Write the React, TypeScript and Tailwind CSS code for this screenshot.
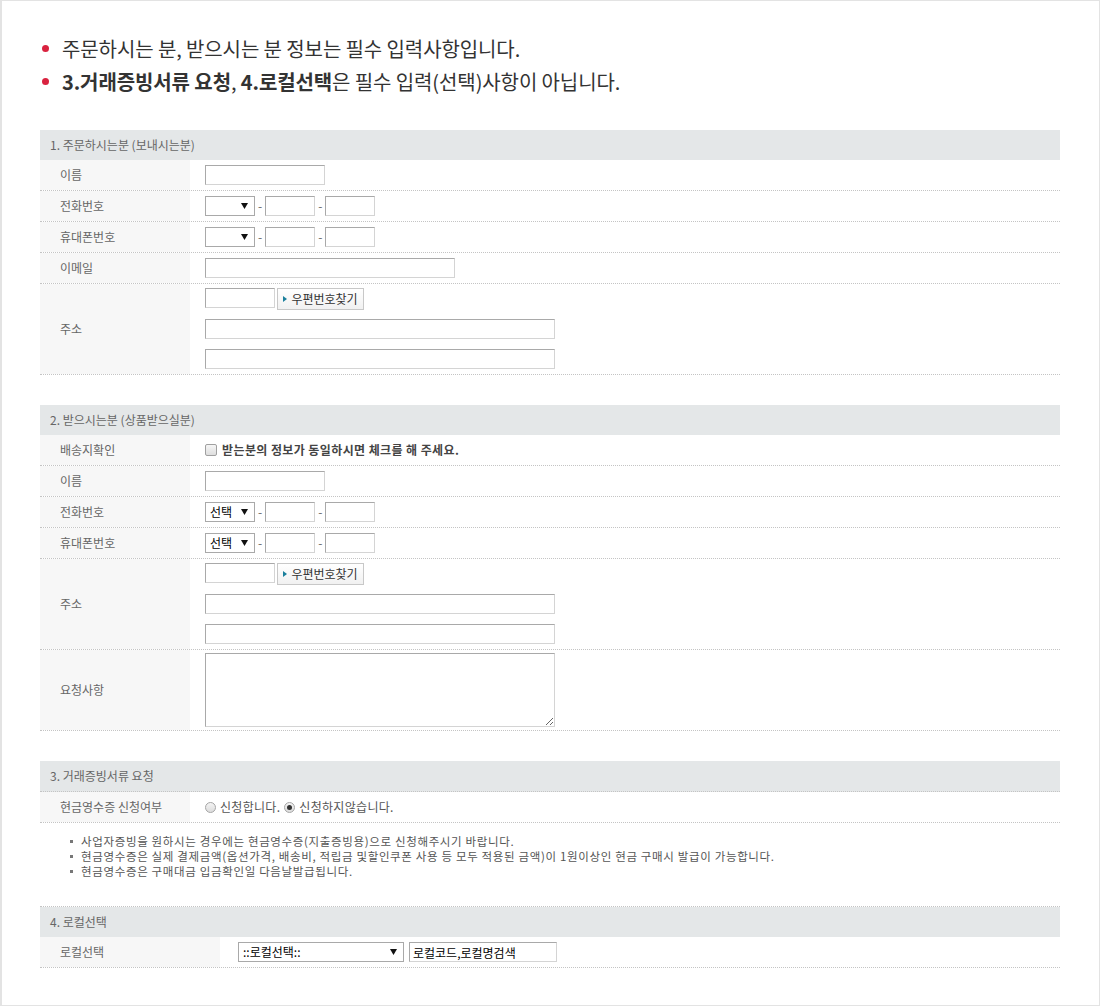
import React from "react";

const font = "font-['Noto_Sans_CJK_KR','Noto_Sans',sans-serif]";

function TextBox({ w, value }: { w: string; value?: string }) {
  return (
    <input
      readOnly
      value={value ?? ""}
      className={`${w} block h-[20px] border border-[#d4d4d4] border-t-[#a9a9a9] border-l-[#a9a9a9] bg-white px-[3px] text-[12px] leading-[18px] text-black outline-none`}
    />
  );
}

function Dropdown({ w, text }: { w: string; text?: string }) {
  return (
    <div
      className={`${w} flex h-[20px] items-center justify-between border border-[#a9a9a9] bg-white pl-[4px] pr-[6px] text-[12px] leading-none text-black`}
    >
      <span>{text ?? ""}</span>
      <svg width="7" height="6" viewBox="0 0 7 6">
        <path d="M0 0h7L3.5 6z" fill="#111" />
      </svg>
    </div>
  );
}

function Dash() {
  return <span className="mx-[3px] text-[12px] text-[#666]">-</span>;
}

function PhoneFields({ text }: { text?: string }) {
  return (
    <div className="flex items-center">
      <Dropdown w="w-[50px]" text={text} />
      <Dash />
      <TextBox w="w-[50px]" />
      <Dash />
      <TextBox w="w-[50px]" />
    </div>
  );
}

function ZipButton() {
  return (
    <button className="flex h-[22px] w-[87px] items-center justify-center gap-[4px] border border-[#c8c8c8] bg-gradient-to-b from-white to-[#f1f1f1] text-[12px] leading-none text-[#333]">
      <svg width="4" height="6" viewBox="0 0 4 6">
        <path d="M0 0l4 3-4 3z" fill="#1a7f9c" />
      </svg>
      우편번호찾기
    </button>
  );
}

function Row({
  label,
  children,
  labelW = "w-[150px]",
  valuePad = "pl-[15px]",
  tall,
}: {
  label: string;
  children: React.ReactNode;
  labelW?: string;
  valuePad?: string;
  tall?: string;
}) {
  return (
    <div className={`flex border-b border-dotted border-[#c4c4c4] ${tall ?? "h-[31px]"}`}>
      <div className={`${labelW} flex shrink-0 items-center bg-[#f7f7f7] pl-[20px] text-[12px] text-[#666]`}>
        {label}
      </div>
      <div className={`flex flex-1 items-center ${valuePad}`}>{children}</div>
    </div>
  );
}

function Header({ title, extra }: { title: string; extra?: string }) {
  return (
    <div className={`flex h-[30px] items-center bg-[#e4e7e8] pl-[10px] text-[12px] text-[#666] ${extra ?? ""}`}>
      {title}
    </div>
  );
}

function Address() {
  return (
    <div className="flex flex-col pt-[4px]">
      <div className="flex items-start gap-[2px]">
        <TextBox w="w-[70px]" />
        <ZipButton />
      </div>
      <div className="mt-[9px] flex">
        <TextBox w="w-[350px]" />
      </div>
      <div className="mt-[10px] flex">
        <TextBox w="w-[350px]" />
      </div>
    </div>
  );
}

function Radio({ checked }: { checked?: boolean }) {
  return (
    <span className="flex h-[11px] w-[11px] items-center justify-center rounded-full border border-[#a5a5a5] bg-gradient-to-b from-[#f4f4f4] to-[#dcdcdc]">
      {checked && <span className="h-[5px] w-[5px] rounded-full bg-[#333]" />}
    </span>
  );
}

const notes = [
  "사업자증빙을 원하시는 경우에는 현금영수증(지출증빙용)으로 신청해주시기 바랍니다.",
  "현금영수증은 실제 결제금액(옵션가격, 배송비, 적립금 및할인쿠폰 사용 등 모두 적용된 금액)이 1원이상인 현금 구매시 발급이 가능합니다.",
  "현금영수증은 구매대금 입금확인일 다음날발급됩니다.",
];

export default function App() {
  return (
    <div className={`h-[1006px] w-[1100px] border border-l-2 border-[#e3e3e3] bg-white ${font}`}>
      <div className="pl-[38px] pr-[39px] pt-[31px]">
        <ul className="text-[20px] leading-[33px] tracking-[-0.1px] text-[#333]">
          <li className="flex items-center">
            <span className="mr-[13px] ml-[2px] h-[7px] w-[7px] rounded-full bg-[#d9223f]" />
            주문하시는 분, 받으시는 분 정보는 필수 입력사항입니다.
          </li>
          <li className="flex items-center">
            <span className="mr-[13px] ml-[2px] h-[7px] w-[7px] rounded-full bg-[#d9223f]" />
            <span>
              <b className="font-bold">3.거래증빙서류 요청</b>, <b className="font-bold">4.로컬선택</b>은 필수
              입력(선택)사항이 아닙니다.
            </span>
          </li>
        </ul>

        {/* 1. 주문하시는분 */}
        <section className="mt-[32px]">
          <Header title="1. 주문하시는분 (보내시는분)" />
          <Row label="이름">
            <TextBox w="w-[120px]" />
          </Row>
          <Row label="전화번호">
            <PhoneFields />
          </Row>
          <Row label="휴대폰번호">
            <PhoneFields />
          </Row>
          <Row label="이메일">
            <TextBox w="w-[250px]" />
          </Row>
          <Row label="주소" tall="h-[91px]">
            <div className="self-start">
              <Address />
            </div>
          </Row>
        </section>

        {/* 2. 받으시는분 */}
        <section className="mt-[30px]">
          <Header title="2. 받으시는분 (상품받으실분)" />
          <Row label="배송지확인">
            <label className="flex items-center gap-[5px]">
              <span className="h-[12px] w-[12px] rounded-[2px] border border-[#a0a0a0] bg-gradient-to-b from-[#f6f6f6] to-[#dedede]" />
              <span className="text-[12px] font-bold tracking-[0.4px] text-[#444]">
                받는분의 정보가 동일하시면 체크를 해 주세요.
              </span>
            </label>
          </Row>
          <Row label="이름">
            <TextBox w="w-[120px]" />
          </Row>
          <Row label="전화번호">
            <PhoneFields text="선택" />
          </Row>
          <Row label="휴대폰번호">
            <PhoneFields text="선택" />
          </Row>
          <Row label="주소" tall="h-[91px]">
            <div className="self-start">
              <Address />
            </div>
          </Row>
          <Row label="요청사항" tall="h-[81px]">
            <textarea
              readOnly
              className="block h-[74px] w-[350px] resize border border-[#d4d4d4] border-t-[#a9a9a9] border-l-[#a9a9a9] bg-white outline-none"
            />
          </Row>
        </section>

        {/* 3. 거래증빙서류 요청 */}
        <section className="mt-[30px]">
          <Header title="3. 거래증빙서류 요청" extra="border-b border-dotted border-[#c4c4c4] h-[31px]" />
          <Row label="현금영수증 신청여부">
            <div className="flex items-center gap-[4px] text-[12px] tracking-[0.3px] text-[#555]">
              <Radio />
              <span>신청합니다.</span>
              <Radio checked />
              <span>신청하지않습니다.</span>
            </div>
          </Row>
          <ul className="pl-[30px] pt-[11px] text-[11.5px] leading-[15px] tracking-[0.65px] text-[#555]">
            {notes.map((n) => (
              <li key={n} className="flex items-center">
                <span className="mr-[8px] h-[3px] w-[3px] bg-[#777]" />
                {n}
              </li>
            ))}
          </ul>
        </section>

        {/* 4. 로컬선택 */}
        <section className="mt-[27px] border-t border-dotted border-[#c4c4c4]">
          <Header title="4. 로컬선택" />
          <Row label="로컬선택" labelW="w-[180px]" valuePad="pl-[18px] gap-[5px]">
            <Dropdown w="w-[166px]" text="::로컬선택::" />
            <TextBox w="w-[148px]" value="로컬코드,로컬명검색" />
          </Row>
        </section>
      </div>
    </div>
  );
}
